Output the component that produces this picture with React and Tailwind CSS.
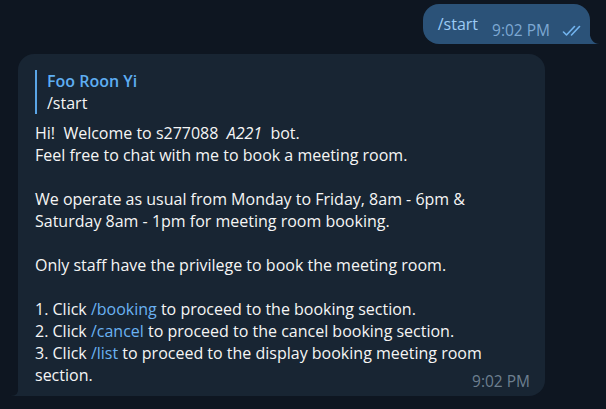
import React from 'react';

const font = { fontFamily: '"Open Sans", "Noto Sans", sans-serif' };

function Checks() {
  return (
    <svg width="21" height="11" viewBox="0 0 21 11" fill="none" stroke="#72b4ef" strokeWidth="1.6" strokeLinecap="round" strokeLinejoin="round">
      <path d="M1.5 7 L4.5 10 L12.5 1.5" />
      <path d="M9.5 10 L17.5 1.5" />
    </svg>
  );
}

function Cmd({ children }) {
  return <span className="text-[#6ab2f2]">{children}</span>;
}

export default function App() {
  return (
    <div className="w-[606px] h-[409px] bg-[#0e1621] flex flex-col overflow-hidden text-[#f5f5f5]" style={font}>
      {/* outgoing */}
      <div className="self-end mr-[16px] mt-[4px] relative">
        <div className="h-[40px] bg-[#2b5278] rounded-[16px] rounded-br-none flex items-start pl-[15px] pr-[7px]">
          <span className="text-[16px] leading-[22px] mt-[9px] text-[#9ccbf5]">/start</span>
          <span className="text-[15.5px] leading-[20px] mt-[16px] ml-[14px] text-[#7da8d3]">9:02 PM</span>
          <span className="ml-[12px] mt-[21px]"><Checks /></span>
        </div>
        <svg className="absolute bottom-0 right-[-10px]" width="11" height="16" viewBox="0 0 11 16">
          <path d="M0 0 Q0.5 16 10.5 16 L0 16 Z" fill="#2b5278" />
        </svg>
      </div>

      {/* incoming */}
      <div className="ml-[18px] mt-[10px] w-[527px] relative">
        <div className="bg-[#182533] rounded-[16px] rounded-bl-none pt-[16px] pb-[10px] pl-[17px] pr-[15px] relative">
          <div className="border-l-2 border-[#5aa5e6] pl-[10px]">
            <div className="text-[16px] leading-[22px] font-semibold text-[#5eaef2]">Foo Roon Yi</div>
            <div className="text-[16px] leading-[22px]">/start</div>
          </div>
          <div className="mt-[8px] text-[16px] leading-[22px] whitespace-pre">
            <div>Hi!  Welcome to s277088  <i>A221</i>  bot.</div>
            <div>Feel free to chat with me to book a meeting room.</div>
            <div>&nbsp;</div>
            <div>We operate as usual from Monday to Friday, 8am - 6pm &amp;</div>
            <div>Saturday 8am - 1pm for meeting room booking.</div>
            <div>&nbsp;</div>
            <div>Only staff have the privilege to book the meeting room.</div>
            <div>&nbsp;</div>
            <div>1. Click <Cmd>/booking</Cmd> to proceed to the booking section.</div>
            <div>2. Click <Cmd>/cancel</Cmd> to proceed to the cancel booking section.</div>
            <div>3. Click <Cmd>/list</Cmd> to proceed to the display booking meeting room</div>
            <div>section.</div>
          </div>
          <span className="absolute right-[15px] bottom-[5px] text-[15.5px] leading-[20px] text-[#6d7f8f]">9:02 PM</span>
        </div>
        <svg className="absolute bottom-0 left-[-8px]" width="9" height="10" viewBox="0 0 9 10">
          <path d="M9 0 Q9 10 0.5 10 L9 10 Z" fill="#182533" />
        </svg>
      </div>
    </div>
  );
}
